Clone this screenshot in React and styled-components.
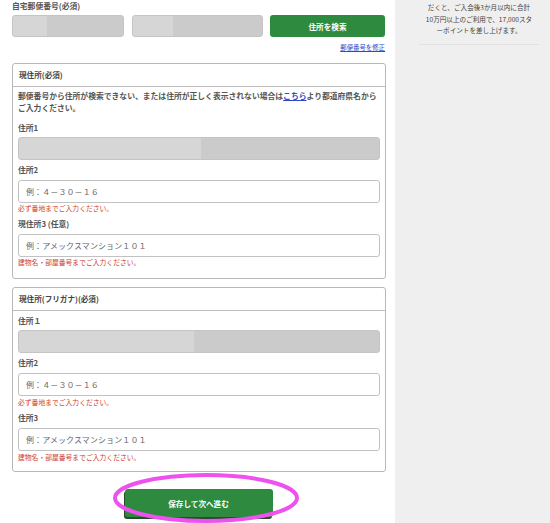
import React from "react";
import styled, { createGlobalStyle } from "styled-components";

const GlobalStyle = createGlobalStyle`
  html, body {
    margin: 0;
    padding: 0;
    background: #fff;
  }
  body {
    font-family: "Noto Sans CJK JP", "Noto Sans", sans-serif;
    color: #444;
  }
`;

const Page = styled.div`
  display: flex;
  width: 550px;
  height: 523px;
  overflow: hidden;
`;

const Main = styled.main`
  width: 395px;
  box-sizing: border-box;
  padding: 0 9px 0 12px;
  background: #fff;
`;

const Side = styled.aside`
  flex: 1;
  background: #efefef;
  padding: 2px 11px 0 24px;
`;

const SideNote = styled.p`
  margin: 0;
  padding-bottom: 7px;
  border-bottom: 1px solid #e2e2e2;
  font-size: 6.6px;
  line-height: 11.5px;
  text-align: center;
  color: #444;
`;

const Label = styled.div`
  font-size: 7.8px;
  line-height: 12px;
  font-weight: 700;
  color: #555;
  margin-top: ${(p) => p.$mt || 0}px;
`;

const ZipRow = styled.div`
  display: flex;
  gap: 8px;
  margin-top: 3px;
  height: 22px;
`;

const Blurred = styled.div`
  box-sizing: border-box;
  height: ${(p) => p.$h || 22}px;
  width: ${(p) => (p.$w ? `${p.$w}px` : "auto")};
  flex: ${(p) => (p.$w ? "none" : 1)};
  margin-top: ${(p) => p.$mt || 0}px;
  border-radius: 3px;
  border: 1px solid #c4c4c4;
  background: linear-gradient(
    to right,
    #d6d6d6 0,
    #d6d6d6 ${(p) => p.$split}px,
    #cbcbcb ${(p) => p.$split}px
  );
`;

const GreenButton = styled.button`
  border: none;
  border-radius: 3px;
  background: #2d8a3e;
  color: #fff;
  font-family: inherit;
  font-weight: 700;
  font-size: 7.6px;
  cursor: pointer;
  width: ${(p) => p.$w}px;
  height: ${(p) => p.$h}px;
  margin-left: ${(p) => p.$ml || 0}px;
  box-shadow: ${(p) => (p.$shadow ? "-1px 2px 0 #2a4a30" : "none")};
`;

const FixLink = styled.div`
  margin-top: 6px;
  text-align: right;
  font-size: 6.4px;
  line-height: 10px;
  padding-right: 1px;
  a {
    color: #2f49c9;
    text-decoration: underline;
  }
`;

const Section = styled.section`
  margin-top: ${(p) => p.$mt}px;
  border: 1px solid #b8b8b8;
  border-radius: 3px;
`;

const SectionHead = styled.div`
  height: 22px;
  line-height: 22px;
  padding: 0 6px;
  border-bottom: 1px solid #bdbdbd;
  font-size: 7.6px;
  font-weight: 700;
  color: #444;
`;

const SectionBody = styled.div`
  padding: 3px 5px ${(p) => p.$pb}px 5px;
`;

const Notice = styled.p`
  margin: 0;
  font-size: 7.8px;
  line-height: 12px;
  font-weight: 700;
  color: #555;
  a {
    color: #2f49c9;
    text-decoration: underline;
  }
`;

const TextInput = styled.input`
  display: block;
  box-sizing: border-box;
  width: 100%;
  height: 23px;
  margin-top: ${(p) => p.$mt || 3}px;
  padding: 0 7px;
  border: 1px solid #c2c2c2;
  border-radius: 3px;
  background: #fff;
  font-family: inherit;
  font-size: 8px;
  letter-spacing: 0.1px;
  &::placeholder {
    color: #666;
  }
`;

const ErrorText = styled.div`
  font-size: 6.8px;
  line-height: 11px;
  margin-top: ${(p) => p.$mt || 0}px;
  color: #d0402c;
`;

const SubmitArea = styled.div`
  position: relative;
  display: flex;
  justify-content: center;
  margin-top: 17px;
  padding-right: 1px;
`;

const Circle = styled.svg`
  position: absolute;
  left: 101px;
  top: -15px;
  pointer-events: none;
  overflow: visible;
`;

function AddressField({ label, placeholder, error, labelMt, errorMt }) {
  return (
    <>
      <Label $mt={labelMt}>{label}</Label>
      <TextInput placeholder={placeholder} $mt={4} />
      {error && <ErrorText $mt={errorMt}>{error}</ErrorText>}
    </>
  );
}

export default function App() {
  return (
    <Page>
      <GlobalStyle />
      <Main>
        <Label>自宅郵便番号(必須)</Label>
        <ZipRow>
          <Blurred $w={112} $split={34} />
          <Blurred $w={131} $split={40} />
          <GreenButton $w={115} $h={22} $ml={-1}>
            住所を検索
          </GreenButton>
        </ZipRow>
        <FixLink>
          <a href="#zip">郵便番号を修正</a>
        </FixLink>

        <Section $mt={10}>
          <SectionHead>現住所(必須)</SectionHead>
          <SectionBody $pb={10}>
            <Notice>
              郵便番号から住所が検索できない、または住所が正しく表示されない場合は
              <a href="#pref">こちら</a>より都道府県名から
              <br />
              ご入力ください。
            </Notice>
            <Label $mt={8}>住所1</Label>
            <Blurred $h={23} $mt={3} $split={182} />
            <AddressField
              label="住所2"
              labelMt={4}
              placeholder="例：４－３０－１６"
              error="必ず番地までご入力ください。"
            />
            <AddressField
              label="現住所3 (任意)"
              labelMt={4}
              placeholder="例：アメックスマンション１０１"
              error="建物名・部屋番号までご入力ください。"
            />
          </SectionBody>
        </Section>

        <Section $mt={8}>
          <SectionHead>現住所(フリガナ)(必須)</SectionHead>
          <SectionBody $pb={8}>
            <Label $mt={1}>住所１</Label>
            <Blurred $h={23} $mt={3} $split={175} />
            <AddressField
              label="住所2"
              labelMt={4}
              errorMt={1}
              placeholder="例：４－３０－１６"
              error="必ず番地までご入力ください。"
            />
            <AddressField
              label="住所3"
              labelMt={4}
              errorMt={1}
              placeholder="例：アメックスマンション１０１"
              error="建物名・部屋番号までご入力ください。"
            />
          </SectionBody>
        </Section>

        <SubmitArea>
          <GreenButton $w={148} $h={28} $shadow>
            保存して次へ進む
          </GreenButton>
          <Circle width="186" height="50" viewBox="0 0 186 50">
            <ellipse
              cx="93"
              cy="24"
              rx="91"
              ry="23"
              fill="none"
              stroke="#ee52ee"
              strokeWidth="4"
            />
          </Circle>
        </SubmitArea>
      </Main>
      <Side>
        <SideNote>
          だくと、ご入会後3か月以内に合計
          <br />
          10万円以上のご利用で、17,000スタ
          <br />
          ーポイントを差し上げます。
        </SideNote>
      </Side>
    </Page>
  );
}
